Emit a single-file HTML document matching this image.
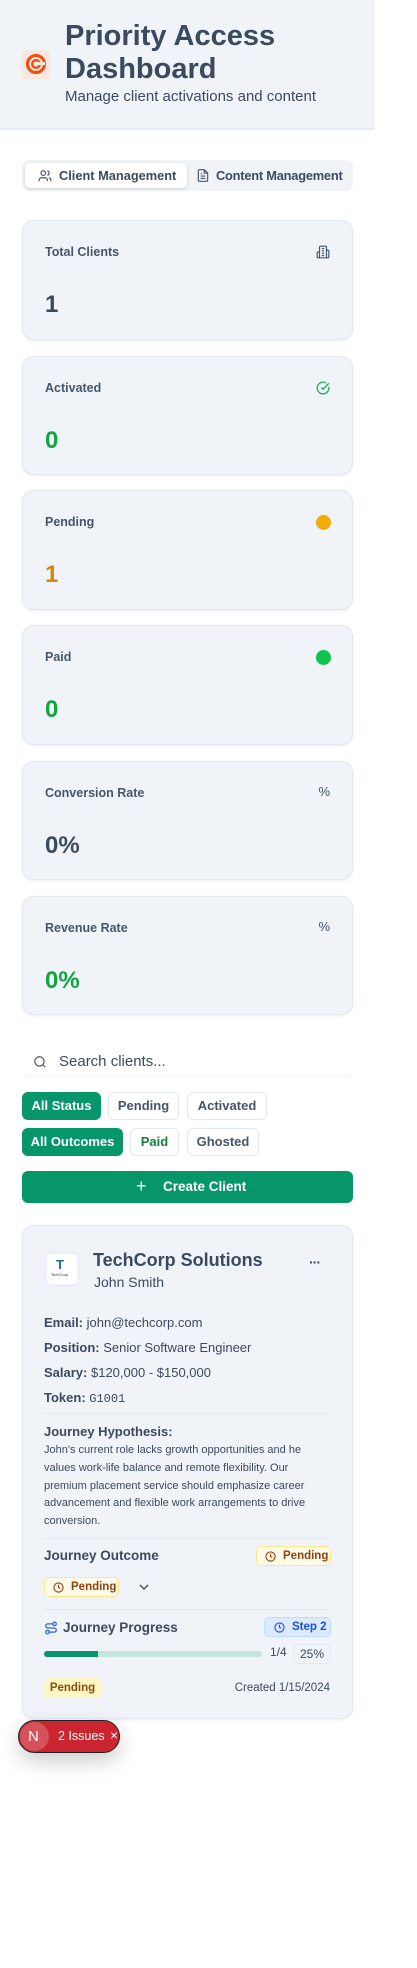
<!DOCTYPE html>
<html><head><meta charset="utf-8"><style>
*{box-sizing:border-box;margin:0;padding:0}
body{width:417px;height:1968px;background:#fff;font-family:"Liberation Sans",sans-serif;color:#3c4a5e;position:relative;overflow:hidden}
.a{position:absolute}
.hdr{left:0;top:0;width:375px;height:130px;background:#f0f4f9;border-bottom:2px solid #e6ebf1}
.card{position:absolute;left:22px;width:331px;background:#f0f4f9;border:1px solid #e3e8ef;border-radius:12px;box-shadow:0 1px 3px rgba(0,0,0,.08)}
.lbl{position:absolute;left:22px;top:24px;font-size:12.5px;font-weight:bold;color:#475569}
.val{position:absolute;left:22px;top:70px;font-size:24px;font-weight:bold}
.ic{position:absolute;right:22px;top:24px}
.pill{position:absolute;height:28px;border-radius:6px;font-size:13px;font-weight:bold;line-height:26px;text-align:center;border:1px solid #e2e8f0;background:#fff;color:#475569}
.pill.on{background:#079669;color:#fff;border-color:#079669}
.t{position:absolute;white-space:nowrap}
.hr{position:absolute;left:21px;width:287px;height:1px;background:#e2e7ee}
.badge{position:absolute;border-radius:5px;font-size:11.5px;font-weight:bold;line-height:18px;white-space:nowrap;display:flex;align-items:center;gap:7px}
</style></head><body>
<div class="a hdr"></div>
<div class="a" style="left:22px;top:50px;width:28px;height:29px;background:#fae8df;border-radius:3px"></div>
<svg class="a" style="left:25px;top:53px" width="22" height="22" viewBox="0 0 22 22"><circle cx="11" cy="11" r="8.5" fill="none" stroke="#f24a0f" stroke-width="3"/><circle cx="11" cy="11" r="3.8" fill="none" stroke="#f24a0f" stroke-width="2.4"/><rect x="12" y="9" width="8" height="3" fill="#fae8df"/></svg>
<div class="t" style="left:65px;top:20px;font-size:29px;font-weight:bold;line-height:33px;color:#3c4a5e">Priority Access<br>Dashboard</div>
<div class="t" style="left:65px;top:88px;font-size:15px;color:#3c4a5e">Manage client activations and content</div>

<div class="a" style="left:22px;top:160px;width:331px;height:31px;background:#f0f4f9;border-radius:7px"></div>
<div class="a" style="left:25px;top:163px;width:162px;height:25px;background:#fff;border-radius:5px;box-shadow:0 1px 3px rgba(0,0,0,.15)"></div>
<svg class="a" style="left:38px;top:169px" width="14" height="14" viewBox="0 0 24 24" fill="none" stroke="#475569" stroke-width="2"><path d="M16 21v-2a4 4 0 0 0-4-4H6a4 4 0 0 0-4 4v2"/><circle cx="9" cy="7" r="4"/><path d="M22 21v-2a4 4 0 0 0-3-3.87M16 3.13a4 4 0 0 1 0 7.75"/></svg>
<div class="t" style="left:59px;top:168px;font-size:12.8px;font-weight:bold;color:#3c4a5e">Client Management</div>
<svg class="a" style="left:196px;top:168px" width="14" height="15" viewBox="0 0 24 24" fill="none" stroke="#475569" stroke-width="2"><path d="M14 2H6a2 2 0 0 0-2 2v16a2 2 0 0 0 2 2h12a2 2 0 0 0 2-2V8z"/><path d="M14 2v6h6M16 13H8M16 17H8M10 9H8"/></svg>
<div class="t" style="left:216px;top:168px;font-size:12.8px;font-weight:bold;color:#3c4a5e;letter-spacing:-0.2px">Content Management</div>

<div class="card" style="top:220px;height:120px"><div class="lbl">Total Clients</div>
<svg class="ic" width="14" height="14" viewBox="0 0 24 24" fill="none" stroke="#475569" stroke-width="2"><path d="M6 22V4a2 2 0 0 1 2-2h8a2 2 0 0 1 2 2v18zM6 12H4a2 2 0 0 0-2 2v6a2 2 0 0 0 2 2h2M18 9h2a2 2 0 0 1 2 2v9a2 2 0 0 1-2 2h-2M10 6h4M10 10h4M10 14h4M10 18h4"/></svg>
<div class="val" style="color:#3c4a5e">1</div></div>
<div class="card" style="top:356px;height:119px"><div class="lbl">Activated</div>
<svg class="ic" width="14" height="14" viewBox="0 0 24 24" fill="none" stroke="#16b04c" stroke-width="2.2"><path d="M21.8 10A10 10 0 1 1 17 3.3"/><path d="m9 11 3 3L22 4"/></svg>
<div class="val" style="color:#11a53f">0</div></div>
<div class="card" style="top:490px;height:120px"><div class="lbl">Pending</div>
<div class="ic" style="width:15px;height:15px;border-radius:50%;background:#f1ad06;right:21px"></div>
<div class="val" style="color:#d48806">1</div></div>
<div class="card" style="top:625px;height:120px"><div class="lbl">Paid</div>
<div class="ic" style="width:15px;height:15px;border-radius:50%;background:#0cc44f;right:21px"></div>
<div class="val" style="color:#11a53f">0</div></div>
<div class="card" style="top:761px;height:119px"><div class="lbl">Conversion Rate</div>
<div class="ic" style="font-size:13px;color:#475569;top:22px">%</div>
<div class="val" style="color:#3c4a5e">0%</div></div>
<div class="card" style="top:896px;height:119px"><div class="lbl">Revenue Rate</div>
<div class="ic" style="font-size:13px;color:#475569;top:22px">%</div>
<div class="val" style="color:#11a53f">0%</div></div>

<div class="a" style="left:22px;top:1046px;width:331px;height:31px;background:#fff;border-bottom:1px solid #eef1f5;border-radius:6px"></div>
<svg class="a" style="left:33px;top:1055px" width="14" height="14" viewBox="0 0 24 24" fill="none" stroke="#475569" stroke-width="2"><circle cx="11" cy="11" r="8"/><path d="m21 21-4.3-4.3"/></svg>
<div class="t" style="left:59px;top:1053px;font-size:15px;color:#3c4a5e">Search clients...</div>

<div class="pill on" style="left:22px;top:1092px;width:79px">All Status</div>
<div class="pill" style="left:108px;top:1092px;width:71px">Pending</div>
<div class="pill" style="left:187px;top:1092px;width:80px">Activated</div>
<div class="pill on" style="left:22px;top:1128px;width:101px">All Outcomes</div>
<div class="pill" style="left:130px;top:1128px;width:49px;color:#15803d">Paid</div>
<div class="pill" style="left:187px;top:1128px;width:72px">Ghosted</div>
<div class="a" style="left:22px;top:1171px;width:331px;height:32px;background:#079669;border-radius:6px"></div>
<div class="t" style="left:136px;top:1176px;font-size:18px;color:#fff">+</div>
<div class="t" style="left:163px;top:1179px;font-size:13.5px;font-weight:bold;color:#fff">Create Client</div>

<div class="card" style="top:1225px;height:494px">
<div class="a" style="left:21px;top:25px;width:36px;height:36px;background:#ede9fe;border-radius:7px;opacity:.6"></div>
<div class="a" style="left:24px;top:28px;width:30px;height:30px;background:#fff;border-radius:4px"></div>
<div class="t" style="left:33px;top:31px;font-size:13px;font-weight:bold;color:#0e7490">T</div>
<div class="t" style="left:28px;top:46px;font-size:4px;color:#334">TechCorp</div>
<div class="t" style="left:70px;top:24px;font-size:18px;font-weight:bold;color:#3c4a5e">TechCorp Solutions</div>
<div class="t" style="left:71px;top:48px;font-size:14px;color:#3c4a5e">John Smith</div>
<div class="t" style="left:286px;top:28px;font-size:14px;font-weight:bold;color:#3c4a5e;letter-spacing:-1px">···</div>
<div class="t" style="left:21px;top:89px;font-size:13px;color:#3c4a5e"><b>Email:</b> john@techcorp.com</div>
<div class="t" style="left:21px;top:114px;font-size:13px;color:#3c4a5e"><b>Position:</b> Senior Software Engineer</div>
<div class="t" style="left:21px;top:139px;font-size:13px;color:#3c4a5e"><b>Salary:</b> $120,000 - $150,000</div>
<div class="t" style="left:21px;top:164px;font-size:13px;color:#3c4a5e"><b>Token:</b> <span style="font-family:'Liberation Mono',monospace;font-size:12px">G1001</span></div>
<div class="hr" style="top:187px"></div>
<div class="t" style="left:21px;top:198px;font-size:13px;font-weight:bold;color:#3c4a5e">Journey Hypothesis:</div>
<div class="a" style="left:21px;top:216px;width:290px;font-size:11px;line-height:17.8px;color:#3c4a5e">John's current role lacks growth opportunities and he values work-life balance and remote flexibility. Our premium placement service should emphasize career advancement and flexible work arrangements to drive conversion.</div>
<div class="hr" style="top:312px"></div>
<div class="t" style="left:21px;top:322px;font-size:13.5px;font-weight:bold;color:#3c4a5e">Journey Outcome</div>
<div class="badge" style="left:233px;top:320px;width:75px;height:20px;background:#fefce8;border:1px solid #fde68a;color:#92400e;padding-left:8px"><svg width="11" height="11" viewBox="0 0 24 24" fill="none" stroke="#92400e" stroke-width="2.4"><circle cx="12" cy="12" r="10"/><path d="M12 6v6l4 2"/></svg>Pending</div>
<div class="badge" style="left:21px;top:351px;width:75px;height:20px;background:#fefce8;border:1px solid #fde68a;color:#92400e;padding-left:8px"><svg width="11" height="11" viewBox="0 0 24 24" fill="none" stroke="#92400e" stroke-width="2.4"><circle cx="12" cy="12" r="10"/><path d="M12 6v6l4 2"/></svg>Pending</div>
<svg class="a" style="left:116px;top:357px" width="10" height="8" viewBox="0 0 10 8" fill="none" stroke="#475569" stroke-width="1.5"><path d="M1 2l4 4 4-4"/></svg>
<div class="hr" style="top:383px"></div>
<svg class="a" style="left:21px;top:395px" width="14" height="14" viewBox="0 0 24 24" fill="none" stroke="#2563eb" stroke-width="2.2"><circle cx="6" cy="19" r="3"/><path d="M9 19h8.5a3.5 3.5 0 0 0 0-7h-11a3.5 3.5 0 0 1 0-7H15"/><circle cx="18" cy="5" r="3"/></svg>
<div class="t" style="left:40px;top:394px;font-size:13.5px;font-weight:bold;color:#3c4a5e">Journey Progress</div>
<div class="badge" style="left:241px;top:391px;width:67px;height:20px;background:#dbeafe;border:1px solid #bfdbfe;color:#1d4ed8;padding-left:9px"><svg width="11" height="11" viewBox="0 0 24 24" fill="none" stroke="#1d4ed8" stroke-width="2.4"><circle cx="12" cy="12" r="10"/><path d="M12 6v6l4 2"/></svg>Step 2</div>
<div class="a" style="left:21px;top:425px;width:218px;height:6px;background:#c5e6dc;border-radius:3px"><div style="width:54px;height:6px;background:#079669;border-radius:3px 0 0 3px"></div></div>
<div class="t" style="left:247px;top:419px;font-size:12px;color:#3c4a5e">1/4</div>
<div class="a" style="left:270px;top:418px;width:38px;height:20px;border:1px solid #e2e8f0;border-radius:5px;font-size:12px;line-height:18px;text-align:center;color:#3c4a5e">25%</div>
<div class="badge" style="left:21px;top:452px;width:57px;height:20px;background:#fef7c3;color:#854d0e;justify-content:center">Pending</div>
<div class="t" style="right:22px;top:456px;font-size:11.5px;color:#3c4a5e">Created 1/15/2024</div>
</div>

<div class="a" style="left:18px;top:1720px;width:102px;height:33px;background:#cb2530;border:1px solid #222;border-radius:17px;box-shadow:0 8px 20px rgba(0,0,0,.2)"></div>
<div class="a" style="left:20px;top:1722px;width:29px;height:29px;border-radius:50%;background:#d5525b"></div>
<div class="t" style="left:28px;top:1728px;font-size:15px;color:#fff">N</div>
<div class="t" style="left:58px;top:1729px;font-size:12.5px;color:#fff">2 Issues</div>
<div class="t" style="left:110px;top:1727px;font-size:14px;color:#fff">×</div>
</body></html>
